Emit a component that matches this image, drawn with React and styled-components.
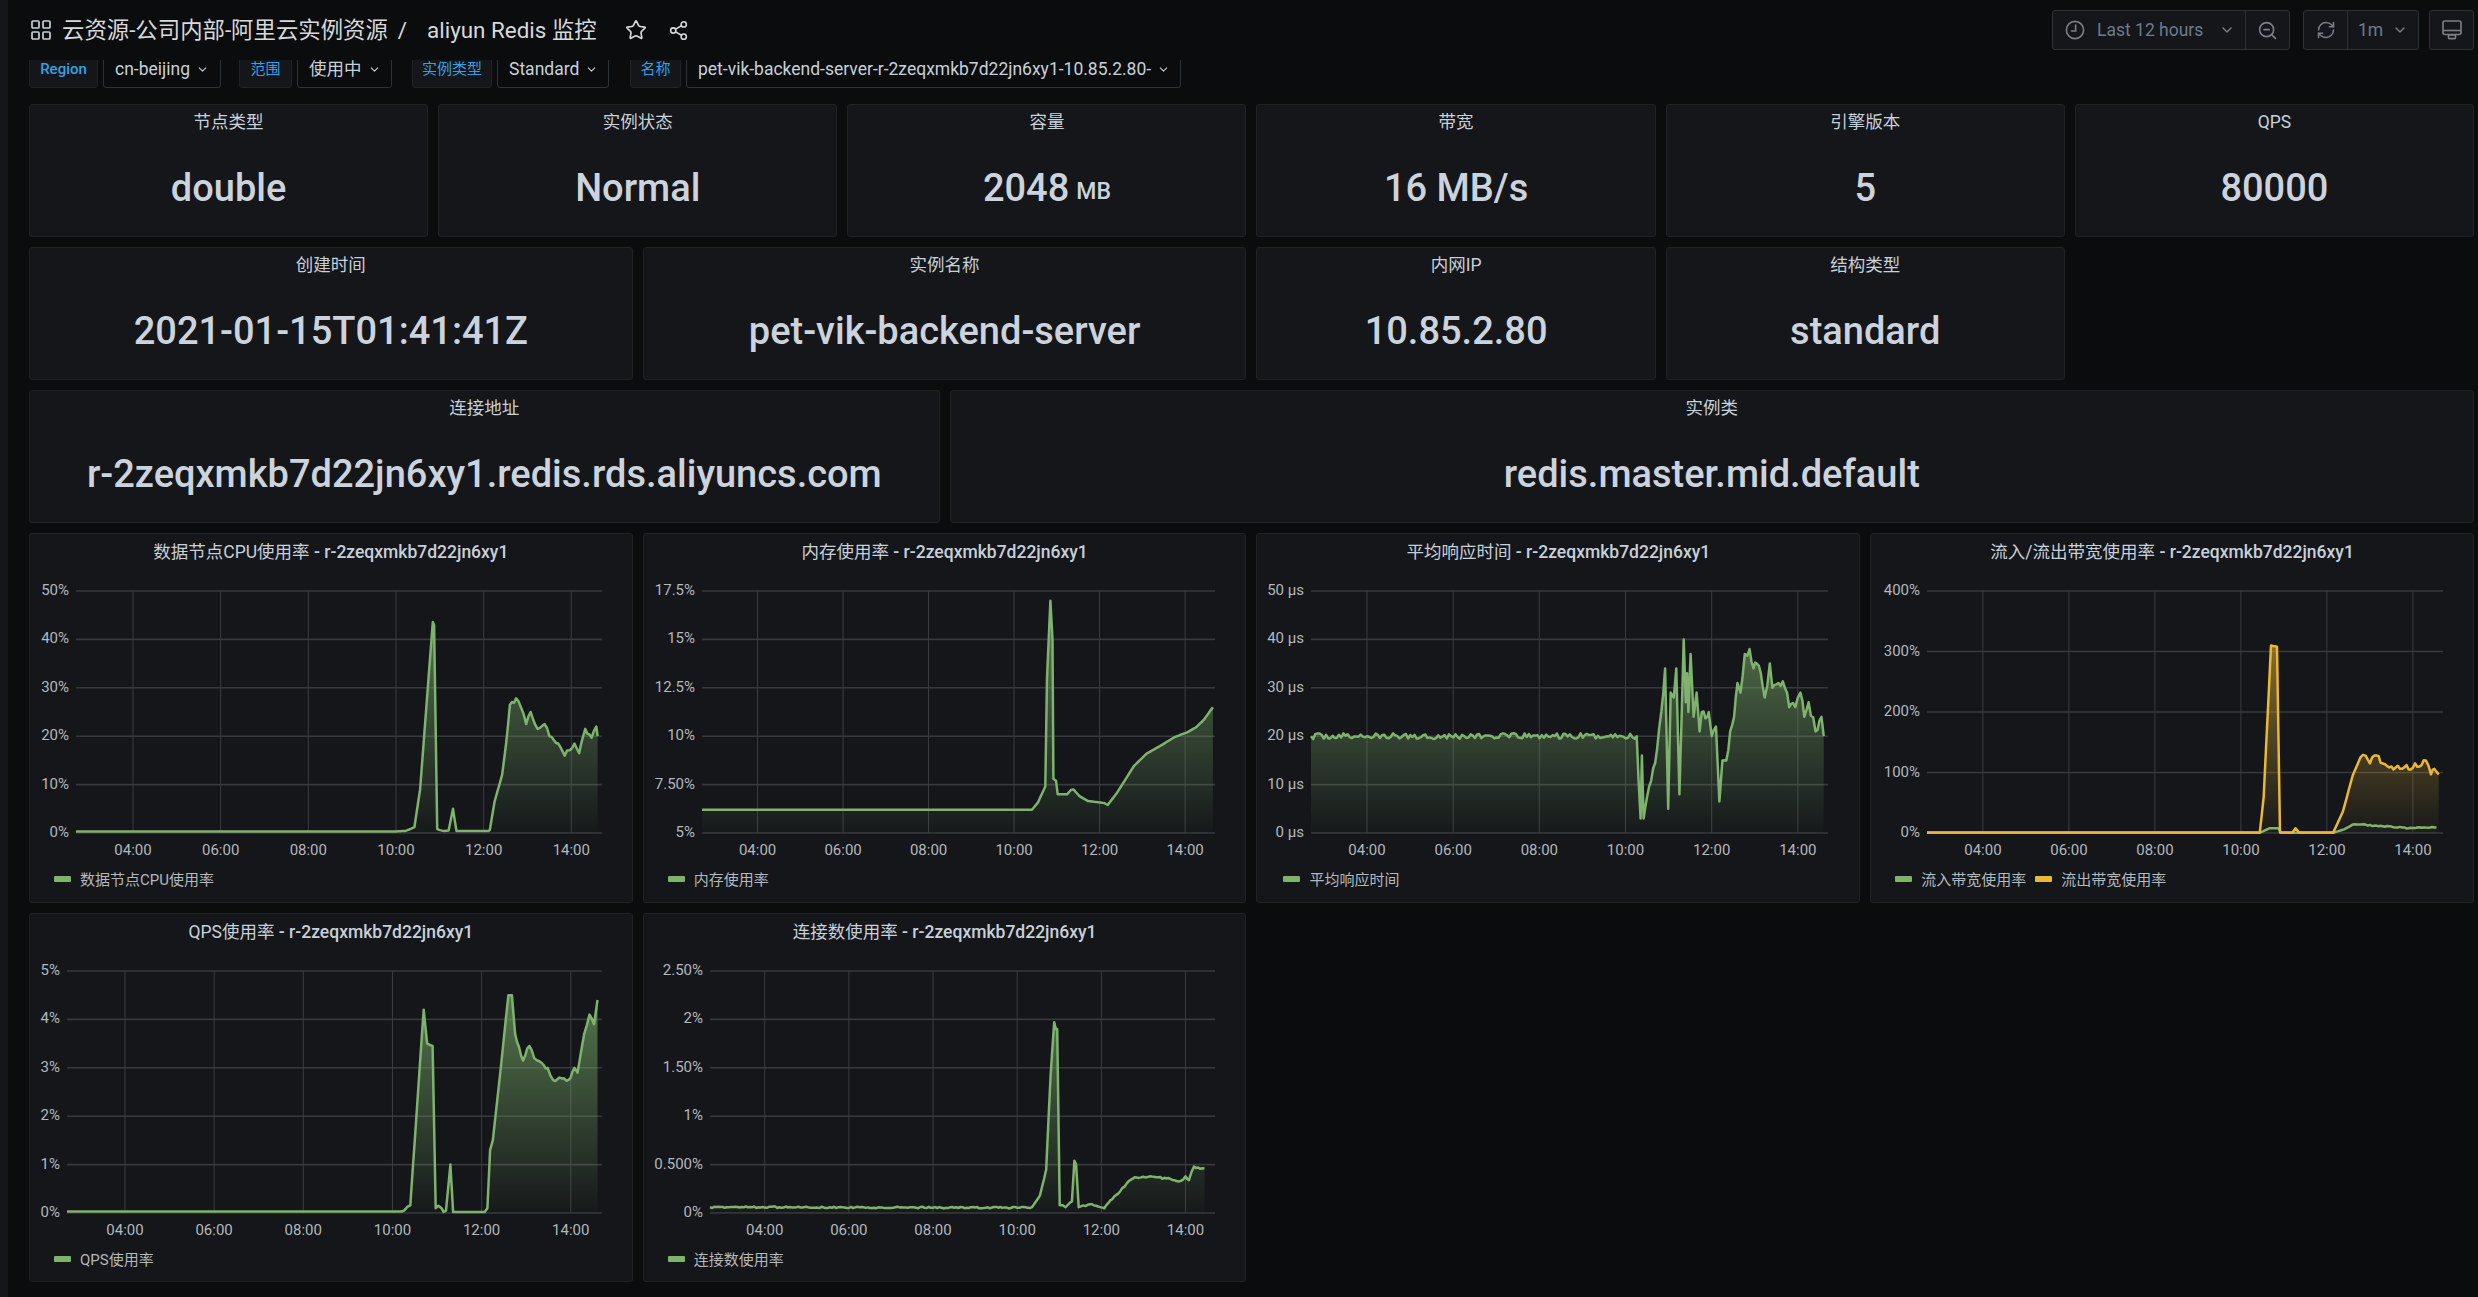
import React from "react";
import styled, { createGlobalStyle } from "styled-components";
import { Star, Share2, ZoomOut, RefreshCw, ChevronDown } from "lucide-react";

const GlobalStyle = createGlobalStyle`
  html, body {
    margin: 0;
    padding: 0;
    height: 100%;
    overflow: hidden;
    background: #0b0c0e;
  }
  body {
    font-family: Roboto, "Noto Sans CJK SC", sans-serif;
    color: #c7d0d9;
  }
`;

const Page = styled.div`
  display: flex;
  width: 2478px;
  height: 1297px;
  overflow: hidden;
  background: #0b0c0e;
`;

const SideStrip = styled.div`
  width: 8px;
  flex: none;
  background: #141619;
`;

const Main = styled.div`
  flex: 1;
  min-width: 0;
  padding: 0 4px 0 21px;
`;

const Toolbar = styled.div`
  height: 58px;
  padding-top: 2px;
  box-sizing: border-box;
  display: flex;
  align-items: center;
  justify-content: space-between;
`;

const TitleGroup = styled.div`
  display: flex;
  align-items: center;
  padding-left: 2px;
  color: #d8d9da;
  font-size: 22.4px;
  svg {
    flex: none;
  }
`;

const Crumb = styled.span`
  margin-left: ${(p) => p.$gap || 0}px;
  line-height: 1;
`;

const TitleIcon = styled.span`
  display: flex;
  margin-left: ${(p) => p.$gap}px;
  color: #d8d9da;
`;

const Controls = styled.div`
  display: flex;
  align-items: center;
`;

const ButtonGroup = styled.div`
  display: flex;
  height: 40px;
  margin-left: ${(p) => p.$gap || 0}px;
  background: #141619;
  border: 1px solid #2c3235;
  border-radius: 3px;
  box-sizing: border-box;
  color: #7b8087;
  font-size: 16px;
`;

const ToolButton = styled.div`
  display: flex;
  align-items: center;
  justify-content: ${(p) => (p.$pad ? "flex-start" : "center")};
  gap: ${(p) => p.$gap || 0}px;
  width: ${(p) => p.$width}px;
  padding-left: ${(p) => p.$pad || 0}px;
  box-sizing: border-box;
  & + & {
    border-left: 1px solid #2c3235;
  }
`;

const ToolText = styled.span`
  color: #6d7b8e;
  font-size: 17.5px;
`;

const ToolChevron = styled(ChevronDown)`
  margin-left: 4px;
`;

const VariableRow = styled.div`
  display: flex;
  align-items: flex-end;
  height: 30px;
  overflow: hidden;
  clip-path: inset(2px 0 0 0);
  margin-bottom: 16px;
`;

const VariableLabel = styled.div`
  width: ${(p) => p.$width}px;
  height: 40px;
  flex: none;
  display: flex;
  align-items: center;
  justify-content: center;
  box-sizing: border-box;
  margin-left: ${(p) => p.$gap || 0}px;
  padding-top: 3px;
  background: #141619;
  border: 1px solid #202226;
  border-radius: 3px;
  color: #33a2e5;
  font-size: 15px;
  line-height: 1;
  font-weight: ${(p) => (p.$bold ? 500 : 400)};
`;

const VariableSelect = styled.div`
  width: ${(p) => p.$width}px;
  height: 40px;
  flex: none;
  display: flex;
  align-items: center;
  gap: 6px;
  box-sizing: border-box;
  margin-left: 5px;
  padding: 3px 0 0 11px;
  background: #0b0c0e;
  border: 1px solid #2c3235;
  border-radius: 3px;
  color: #c7d0d9;
  font-size: 17.5px;
  line-height: 1;
  white-space: nowrap;
`;

const Grid = styled.div`
  display: grid;
  grid-template-columns: repeat(24, 1fr);
  grid-template-rows: 133px 133px 133px 370px 369px;
  column-gap: 10px;
  row-gap: 10px;
`;

const Panel = styled.div`
  grid-column: span ${(p) => p.$span};
  min-width: 0;
  display: flex;
  flex-direction: column;
  box-sizing: border-box;
  background: #141619;
  border: 1px solid #202226;
  border-radius: 3px;
`;

const StatTitle = styled.div`
  height: 33px;
  flex: none;
  display: flex;
  align-items: center;
  justify-content: center;
  font-size: 17.5px;
  line-height: 20px;
  color: #c7d0d9;
`;

const StatValue = styled.div`
  flex: 1;
  display: flex;
  align-items: center;
  justify-content: center;
  gap: 7px;
  padding-top: 2px;
  font-size: 38px;
  font-weight: 500;
  color: #ccd3dc;
  white-space: nowrap;
`;

const StatUnit = styled.span`
  font-size: 23px;
  margin-top: 6px;
`;

const ChartTitle = styled.div`
  height: 35px;
  margin-bottom: 2px;
  flex: none;
  display: flex;
  align-items: center;
  justify-content: center;
  font-size: 17.5px;
  line-height: 20px;
  white-space: pre;
  color: #c7d0d9;
`;

const ChartInstance = styled.span`
  font-weight: 500;
`;

const ChartSvg = styled.svg`
  display: block;
  flex: none;
  width: 100%;
  height: 290px;
`;

const GridLine = styled.line`
  stroke: ${(p) => (p.$major ? "#37393c" : "#3a3c40")};
  stroke-width: ${(p) => (p.$major ? 1.6 : 1)};
`;

const AxisLabel = styled.text`
  fill: #b3b8bd;
  font-size: 15px;
  font-family: Roboto, sans-serif;
`;

const Legend = styled.div`
  display: flex;
  align-items: center;
  gap: 9px;
  padding: 7px 0 0 ${(p) => p.$left}px;
  font-size: 15px;
  color: #b3b8bd;
`;

const LegendItem = styled.div`
  display: flex;
  align-items: center;
  gap: 9px;
`;

const Swatch = styled.i`
  display: block;
  width: 17px;
  height: 6px;
  background: ${(p) => p.$color};
  border-radius: 1px;
`;

const GREEN = "#7eb26d";
const YELLOW = "#eab839";
const HOURS = ["04:00", "06:00", "08:00", "10:00", "12:00", "14:00"];
const PLOT_TOP = 20;
const PLOT_BOTTOM = 262;

// little seeded random, so the jitter stays the same on each load
function makeRandom(seed) {
  let s = seed;
  return () => {
    s = (s * 16807) % 2147483647;
    return s / 2147483647 - 0.5;
  };
}

function expand(series, seed) {
  const random = makeRandom(seed);
  const out = [];
  const { points, noise = 0, baseNoise = 0, noiseFrom = 0 } = series;
  for (let i = 0; i < points.length - 1; i++) {
    const [t0, v0] = points[i];
    const [t1, v1] = points[i + 1];
    const steps = Math.max(1, Math.round((t1 - t0) / 0.05));
    for (let k = 0; k < steps; k++) {
      const t = t0 + ((t1 - t0) * k) / steps;
      const amp = t < noiseFrom ? baseNoise : noise;
      const v = v0 + ((v1 - v0) * k) / steps + (k === 0 ? 0 : random() * amp * 2);
      out.push([t, v]);
    }
  }
  out.push(points[points.length - 1]);
  return out;
}

function Chart({ id, left, right, ticks, min, max, series, seed }) {
  const xOf = (t) => left + ((t - 2.7) * (right - left)) / 12;
  const yOf = (v) => PLOT_BOTTOM - ((v - min) / (max - min)) * (PLOT_BOTTOM - PLOT_TOP);
  const fillFrom = (v) => yOf(Math.max(v, min));

  return (
    <ChartSvg>
      <defs>
        {series.map((s) => (
          <linearGradient
            key={s.color}
            id={`${id}-${s.color.slice(1)}`}
            gradientUnits="userSpaceOnUse"
            x1="0"
            x2="0"
            y1={PLOT_TOP}
            y2={PLOT_BOTTOM}
          >
            <stop offset="0" stopColor={s.color} stopOpacity="0.68" />
            <stop offset="1" stopColor={s.color} stopOpacity="0.02" />
          </linearGradient>
        ))}
      </defs>
      {ticks.map((label, i) => {
        const y = PLOT_BOTTOM - (i * (PLOT_BOTTOM - PLOT_TOP)) / (ticks.length - 1);
        return (
          <g key={label}>
            <GridLine $major x1={left} x2={right} y1={y} y2={y} />
            <AxisLabel x={left - 7} y={y + 4} textAnchor="end">
              {label}
            </AxisLabel>
          </g>
        );
      })}
      {HOURS.map((label, i) => {
        const x = xOf(4 + i * 2);
        return (
          <g key={label}>
            <GridLine x1={x} x2={x} y1={PLOT_TOP} y2={PLOT_BOTTOM} />
            <AxisLabel x={x} y={PLOT_BOTTOM + 22} textAnchor="middle">
              {label}
            </AxisLabel>
          </g>
        );
      })}
      {series.map((s, n) => {
        const pts = expand(s, seed + n * 37);
        const line = pts.map(([t, v]) => `${xOf(t).toFixed(1)},${fillFrom(v).toFixed(1)}`).join(" ");
        const first = xOf(pts[0][0]).toFixed(1);
        const last = xOf(pts[pts.length - 1][0]).toFixed(1);
        return (
          <g key={s.color}>
            <polygon
              points={`${first},${PLOT_BOTTOM} ${line} ${last},${PLOT_BOTTOM}`}
              fill={`url(#${id}-${s.color.slice(1)})`}
            />
            <polyline points={line} fill="none" stroke={s.color} strokeWidth="2.5" strokeLinejoin="round" />
          </g>
        );
      })}
    </ChartSvg>
  );
}

function AppsIcon() {
  return (
    <svg width="20" height="20" viewBox="0 0 20 20" fill="none" stroke="#c7d0d9" strokeWidth="1.7">
      <rect x="1" y="1" width="7" height="7" rx="1" />
      <rect x="12" y="1" width="7" height="7" rx="1" />
      <rect x="1" y="12" width="7" height="7" rx="1" />
      <rect x="12" y="12" width="7" height="7" rx="1" />
    </svg>
  );
}

function ClockIcon() {
  return (
    <svg width="20" height="20" viewBox="0 0 20 20" fill="none" stroke="#7b8087" strokeWidth="1.6" strokeLinecap="round">
      <circle cx="10" cy="10" r="8.6" />
      <polyline points="10.6,5 10.6,11 6.5,11" />
    </svg>
  );
}

function MonitorIcon() {
  return (
    <svg width="20" height="20" viewBox="0 0 20 20" fill="none" stroke="#7b8087" strokeWidth="1.6" strokeLinejoin="round">
      <rect x="1" y="1" width="18" height="13.5" rx="2" />
      <line x1="1" y1="10.5" x2="19" y2="10.5" />
      <rect x="6.5" y="15" width="7" height="3.6" rx="0.8" />
    </svg>
  );
}

const STATS = [
  { span: 4, title: "节点类型", value: "double" },
  { span: 4, title: "实例状态", value: "Normal" },
  { span: 4, title: "容量", value: "2048", unit: "MB" },
  { span: 4, title: "带宽", value: "16 MB/s" },
  { span: 4, title: "引擎版本", value: "5" },
  { span: 4, title: "QPS", value: "80000" },
  { span: 6, title: "创建时间", value: "2021-01-15T01:41:41Z" },
  { span: 6, title: "实例名称", value: "pet-vik-backend-server" },
  { span: 4, title: "内网IP", value: "10.85.2.80" },
  { span: 4, title: "结构类型", value: "standard" },
  { gap: 4 },
  { span: 9, title: "连接地址", value: "r-2zeqxmkb7d22jn6xy1.redis.rds.aliyuncs.com" },
  { span: 15, title: "实例类", value: "redis.master.mid.default" },
];

const CHARTS = [
  {
    name: "数据节点CPU使用率",
    left: 46,
    right: 572,
    min: 0,
    max: 50,
    ticks: ["0%", "10%", "20%", "30%", "40%", "50%"],
    legendLeft: 24,
    seed: 11,
    series: [
      {
        color: GREEN,
        noise: 0.45,
        noiseFrom: 12.55,
        points: [
          [2.7, 0.3], [9.9, 0.3], [10.2, 0.4], [10.35, 0.9], [10.42, 1.2], [10.55, 9], [10.7, 27], [10.84, 43.6], [10.87, 43],
          [10.94, 0.8], [11.0, 0.6], [11.1, 0.4], [11.2, 0.5], [11.3, 5], [11.38, 0.4], [12.1, 0.4], [12.14, 0.6],
          [12.25, 6.5], [12.42, 12], [12.52, 19], [12.6, 26.5], [12.74, 27.8], [12.85, 26], [12.97, 22.5], [13.07, 25],
          [13.23, 21.5], [13.39, 22.5], [13.5, 20], [13.7, 18.5], [13.85, 16], [14.07, 18.5], [14.18, 16.5], [14.32, 21.5],
          [14.46, 19.7], [14.57, 22], [14.6, 20],
        ],
      },
    ],
  },
  {
    name: "内存使用率",
    left: 58,
    right: 571,
    min: 5,
    max: 17.5,
    ticks: ["5%", "7.50%", "10%", "12.5%", "15%", "17.5%"],
    legendLeft: 24,
    seed: 23,
    series: [
      {
        color: GREEN,
        points: [
          [2.7, 6.2], [10.42, 6.2], [10.56, 6.58], [10.73, 7.4], [10.77, 13], [10.85, 17], [10.9, 15], [10.92, 7.8], [10.98, 7.7],
          [11.02, 7.0], [11.24, 7.0], [11.33, 7.22], [11.39, 7.25], [11.53, 6.9], [11.73, 6.65], [12.11, 6.55], [12.19, 6.45],
          [12.4, 7.05], [12.8, 8.45], [13.1, 9.1], [13.46, 9.55], [13.75, 9.95], [14.05, 10.2], [14.25, 10.45], [14.44, 10.85], [14.65, 11.5],
        ],
      },
    ],
  },
  {
    name: "平均响应时间",
    left: 54,
    right: 571,
    min: 0,
    max: 50,
    ticks: ["0 μs", "10 μs", "20 μs", "30 μs", "40 μs", "50 μs"],
    legendLeft: 26,
    seed: 37,
    series: [
      {
        color: GREEN,
        noise: 1,
        baseNoise: 0.6,
        noiseFrom: 10.3,
        points: [
          [2.7, 20], [10.26, 20], [10.35, 3], [10.38, 16], [10.42, 3], [10.5, 7.5], [10.69, 14.5], [10.83, 25], [10.92, 34],
          [10.99, 5], [11.05, 29], [11.12, 28], [11.18, 34], [11.25, 8], [11.35, 40], [11.4, 27], [11.43, 33], [11.46, 25],
          [11.51, 37], [11.58, 24], [11.65, 29], [11.72, 21], [11.77, 25], [11.9, 24], [11.93, 25], [12, 20], [12.1, 22],
          [12.18, 6.5], [12.25, 15], [12.34, 15], [12.43, 21], [12.52, 24], [12.6, 31], [12.67, 29], [12.77, 37], [12.88, 38],
          [12.97, 34], [13.05, 35], [13.14, 33], [13.23, 28], [13.35, 35], [13.41, 30], [13.55, 31], [13.7, 30], [13.8, 26],
          [13.94, 26], [14.06, 29], [14.15, 24], [14.25, 27], [14.41, 21], [14.55, 24], [14.6, 20],
        ],
      },
    ],
  },
  {
    name: "流入/流出带宽使用率",
    left: 56,
    right: 572,
    min: 0,
    max: 400,
    ticks: ["0%", "100%", "200%", "300%", "400%"],
    legend: ["流入带宽使用率", "流出带宽使用率"],
    legendLeft: 24,
    seed: 41,
    series: [
      {
        color: GREEN,
        noise: 0.8,
        noiseFrom: 12.5,
        points: [
          [2.7, 0.5], [10.44, 0.5], [10.67, 8], [10.87, 8], [10.93, 0.5], [12.15, 0.5], [12.4, 6], [12.6, 14], [12.8, 14], [13.1, 12],
          [13.5, 10.5], [13.9, 8], [14.3, 9], [14.55, 9],
        ],
      },
      {
        color: YELLOW,
        noise: 5,
        noiseFrom: 12.75,
        points: [
          [2.7, 1], [10.44, 1], [10.53, 60], [10.7, 310], [10.84, 308], [10.91, 1], [11.2, 1], [11.27, 8], [11.35, 1], [12.15, 1],
          [12.37, 35], [12.6, 95], [12.78, 125], [12.9, 128], [13.0, 115], [13.1, 128], [13.55, 105], [14.2, 112], [14.3, 120],
          [14.42, 97], [14.5, 106], [14.6, 97],
        ],
      },
    ],
  },
  {
    name: "QPS使用率",
    left: 37,
    right: 572,
    min: 0,
    max: 5,
    ticks: ["0%", "1%", "2%", "3%", "4%", "5%"],
    legendLeft: 24,
    seed: 53,
    series: [
      {
        color: GREEN,
        noise: 0.05,
        noiseFrom: 12.7,
        points: [
          [2.7, 0.03], [10.2, 0.03], [10.26, 0.05], [10.34, 0.13], [10.4, 0.16], [10.7, 4.2], [10.78, 3.5], [10.9, 3.45], [10.97, 0.1],
          [11.03, 0.15], [11.1, 0.1], [11.15, 0.02], [11.2, 0.05], [11.3, 1], [11.36, 0.02], [12.07, 0.02], [12.13, 0.1], [12.19, 1.3],
          [12.25, 1.5], [12.43, 3], [12.6, 4.5], [12.68, 4.5], [12.75, 3.7], [12.93, 3.15], [13.07, 3.45], [13.18, 3.2], [13.35, 3.1],
          [13.48, 3], [13.6, 2.75], [13.95, 2.75], [14.08, 3], [14.15, 2.9], [14.3, 3.7], [14.42, 4.1], [14.52, 3.9], [14.6, 4.4],
        ],
      },
    ],
  },
  {
    name: "连接数使用率",
    left: 66,
    right: 571,
    min: 0,
    max: 2.5,
    ticks: ["0%", "0.500%", "1%", "1.50%", "2%", "2.50%"],
    legendLeft: 24,
    seed: 67,
    series: [
      {
        color: GREEN,
        noise: 0.012,
        baseNoise: 0.008,
        noiseFrom: 12.6,
        points: [
          [2.7, 0.06], [10.25, 0.055], [10.35, 0.06], [10.54, 0.18], [10.69, 0.45], [10.79, 1.4], [10.88, 1.97], [10.92, 1.9], [10.95, 1.9],
          [11.01, 0.08], [11.08, 0.08], [11.15, 0.06], [11.3, 0.12], [11.36, 0.54], [11.4, 0.5], [11.46, 0.06], [11.73, 0.09], [12.07, 0.05],
          [12.21, 0.13], [12.4, 0.2], [12.65, 0.33], [12.79, 0.37], [13.3, 0.37], [13.88, 0.33], [14.0, 0.38], [14.08, 0.34], [14.2, 0.48], [14.45, 0.46],
        ],
      },
    ],
  },
];

export default function App() {
  return (
    <Page>
      <GlobalStyle />
      <SideStrip />
      <Main>
        <Toolbar>
          <TitleGroup>
            <AppsIcon />
            <Crumb $gap={11}>云资源-公司内部-阿里云实例资源</Crumb>
            <Crumb $gap={10}>/</Crumb>
            <Crumb $gap={20}>aliyun Redis 监控</Crumb>
            <TitleIcon $gap={28}>
              <Star size={22} strokeWidth={1.8} />
            </TitleIcon>
            <TitleIcon $gap={21}>
              <Share2 size={21} strokeWidth={1.8} />
            </TitleIcon>
          </TitleGroup>
          <Controls>
            <ButtonGroup>
              <ToolButton $width={192} $gap={12} $pad={12}>
                <ClockIcon />
                <ToolText>Last 12 hours</ToolText>
                <ToolChevron size={16} />
              </ToolButton>
              <ToolButton $width={44}>
                <ZoomOut size={21} strokeWidth={1.8} />
              </ToolButton>
            </ButtonGroup>
            <ButtonGroup $gap={13}>
              <ToolButton $width={43}>
                <RefreshCw size={20} strokeWidth={1.8} />
              </ToolButton>
              <ToolButton $width={71} $gap={9}>
                <ToolText>1m</ToolText>
                <ChevronDown size={16} />
              </ToolButton>
            </ButtonGroup>
            <ButtonGroup $gap={10}>
              <ToolButton $width={43}>
                <MonitorIcon />
              </ToolButton>
            </ButtonGroup>
          </Controls>
        </Toolbar>

        <VariableRow>
          <VariableLabel $bold $width={69}>Region</VariableLabel>
          <VariableSelect $width={118}>
            cn-beijing
            <ChevronDown size={13} />
          </VariableSelect>
          <VariableLabel $width={53} $gap={18}>范围</VariableLabel>
          <VariableSelect $width={95}>
            使用中
            <ChevronDown size={13} />
          </VariableSelect>
          <VariableLabel $width={80} $gap={20}>实例类型</VariableLabel>
          <VariableSelect $width={112}>
            Standard
            <ChevronDown size={13} />
          </VariableSelect>
          <VariableLabel $width={51} $gap={21}>名称</VariableLabel>
          <VariableSelect $width={495}>
            pet-vik-backend-server-r-2zeqxmkb7d22jn6xy1-10.85.2.80-
            <ChevronDown size={13} />
          </VariableSelect>
        </VariableRow>

        <Grid>
          {STATS.map((stat, i) =>
            stat.gap ? (
              <div key={i} style={{ gridColumn: `span ${stat.gap}` }} />
            ) : (
              <Panel key={stat.title} $span={stat.span}>
                <StatTitle>{stat.title}</StatTitle>
                <StatValue>
                  {stat.value}
                  {stat.unit && <StatUnit>{stat.unit}</StatUnit>}
                </StatValue>
              </Panel>
            )
          )}
          {CHARTS.map((chart, i) => (
            <Panel key={chart.name} $span={6}>
              <ChartTitle>
                {chart.name}
                <ChartInstance> - r-2zeqxmkb7d22jn6xy1</ChartInstance>
              </ChartTitle>
              <Chart id={`chart${i}`} {...chart} />
              <Legend $left={chart.legendLeft}>
                {(chart.legend || [chart.name]).map((label, n) => (
                  <LegendItem key={label}>
                    <Swatch $color={chart.series[n].color} />
                    {label}
                  </LegendItem>
                ))}
              </Legend>
            </Panel>
          ))}
        </Grid>
      </Main>
    </Page>
  );
}
